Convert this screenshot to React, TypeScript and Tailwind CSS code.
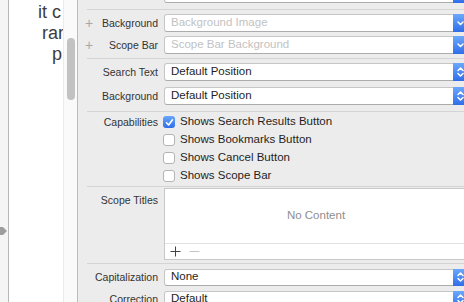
import React from 'react';

function Chevron({ double }: { double?: boolean }) {
    return (
        <svg width="9" height="12" viewBox="0 0 9 12" fill="none" stroke="white" strokeWidth="1.5" strokeLinecap="round" strokeLinejoin="round">
            {double ? (
                <>
                    <path d="M2 4.5 L4.5 2 L7 4.5" />
                    <path d="M2 7.5 L4.5 10 L7 7.5" />
                </>
            ) : (
                <path d="M2 5 L4.5 7.5 L7 5" />
            )}
        </svg>
    );
}

function Field({ text, placeholder, single, h = 'h-[18px]' }: { text?: string; placeholder?: boolean; single?: boolean; h?: string }) {
    return (
        <div className={`flex ${h} w-[304px] shrink-0 items-stretch rounded-[3px] border border-[#c6c6c6] border-b-[#acacac] bg-white`}>
            <div className={`flex flex-1 items-center pl-[6px] text-[11.5px] ${placeholder ? 'text-[#c2c2c2]' : 'text-[#1e1e1e]'}`}>{text}</div>
            <div className="-my-px -mr-px flex w-[15px] items-center justify-center rounded-r-[3px] bg-gradient-to-b from-[#6ba8fc] to-[#2f6ee9]">
                <Chevron double={!single} />
            </div>
        </div>
    );
}

function Row({ label, plus, children, className = '' }: { label: string; plus?: boolean; children: React.ReactNode; className?: string }) {
    return (
        <div className={`flex h-[18px] items-center ${className}`}>
            <div className="flex w-[80px] shrink-0 items-center justify-between pl-[7px]">
                <span className="text-[14px] font-light leading-none text-[#a8a8a8]">{plus ? '+' : ''}</span>
                <span className="text-[10.5px] leading-none text-[#333]">{label}</span>
            </div>
            <div className="ml-[6px]">{children}</div>
        </div>
    );
}

function Check({ on, label }: { on?: boolean; label: string }) {
    return (
        <div className="flex h-[18px] items-center">
            {on ? (
                <div className="flex h-[12px] w-[12px] items-center justify-center rounded-[3px] bg-gradient-to-b from-[#69a6fb] to-[#2f6ee9]">
                    <svg width="9" height="9" viewBox="0 0 9 9" fill="none" stroke="white" strokeWidth="1.6" strokeLinecap="round" strokeLinejoin="round">
                        <path d="M1.5 4.8 L3.6 7 L7.5 1.8" />
                    </svg>
                </div>
            ) : (
                <div className="h-[12px] w-[12px] rounded-[3px] border border-[#b4b4b4] bg-white" />
            )}
            <span className="ml-[5px] text-[11.5px] leading-none text-[#1e1e1e]">{label}</span>
        </div>
    );
}

function Divider({ className = '' }: { className?: string }) {
    return <div className={`ml-[9px] h-px shrink-0 bg-[#d4d4d4] ${className}`} />;
}

export default function App() {
    return (
        <div className="flex h-[302px] w-[464px] overflow-hidden bg-[#ececec]" style={{ fontFamily: '"Liberation Sans", Arial, sans-serif' }}>
            {/* left edge of the canvas */}
            <div className="relative w-[9px] shrink-0 border-r border-[#b8b8b8] bg-[#f5f5f5]">
                <svg className="absolute left-0 top-[225px]" width="8" height="12" viewBox="0 0 8 12">
                    <path d="M0 2 L3 2 L7 6 L3 10 L0 10 Z" fill="#9d9d9d" />
                </svg>
            </div>
            <div className="w-[54px] shrink-0 overflow-hidden bg-white pt-[2px] text-[18px] leading-[21px] text-[#3c3c3c]">
                <div className="whitespace-nowrap pl-[29px]">it c</div>
                <div className="whitespace-nowrap pl-[33px]">rar</div>
                <div className="whitespace-nowrap pl-[43px]">p</div>
            </div>
            <div className="w-[15px] shrink-0 border-l border-r border-l-[#ebebeb] border-r-[#bcbcbc] bg-[#fafafa] pl-[3px] pt-[38px]">
                <div className="h-[62px] w-[8px] rounded-full bg-[#c2c2c2]" />
            </div>

            {/* inspector */}
            <div className="flex h-[302px] w-[390px] shrink-0 flex-col">
                <div className="-mt-[15px] ml-[86px] shrink-0">
                    <Field text="" single />
                </div>
                <Divider className="mt-[6px]" />
                <Row label="Background" plus className="mt-[4px] shrink-0">
                    <Field text="Background Image" placeholder single />
                </Row>
                <Row label="Scope Bar" plus className="mt-[4px] shrink-0">
                    <Field text="Scope Bar Background" placeholder single />
                </Row>
                <Divider className="mt-[4px]" />
                <Row label="Search Text" className="mt-[4px] shrink-0">
                    <Field text="Default Position" />
                </Row>
                <Row label="Background" className="mt-[6px] shrink-0">
                    <Field text="Default Position" />
                </Row>
                <Divider className="mt-[6px]" />

                <div className="mt-[1px] flex shrink-0">
                    <div className="flex h-[18px] w-[80px] shrink-0 items-center justify-end">
                        <span className="text-[10.5px] leading-none text-[#333]">Capabilities</span>
                    </div>
                    <div className="ml-[5px] flex flex-col">
                        <Check on label="Shows Search Results Button" />
                        <Check label="Shows Bookmarks Button" />
                        <Check label="Shows Cancel Button" />
                        <Check label="Shows Scope Bar" />
                    </div>
                </div>
                <Divider className="mt-[1px]" />

                <div className="mt-[1px] flex shrink-0">
                    <div className="flex w-[80px] shrink-0 justify-end pt-[7px]">
                        <span className="text-[10.5px] leading-none text-[#333]">Scope Titles</span>
                    </div>
                    <div className="ml-[6px] flex h-[72px] w-[304px] flex-col border border-[#c8c8c8] bg-white">
                        <div className="flex flex-1 items-center justify-center text-[11.5px] text-[#8e8e8e]">No Content</div>
                        <div className="flex h-[16px] items-center gap-[8px] border-t border-[#e2e2e2] pl-[5px]">
                            <svg width="11" height="11" viewBox="0 0 11 11" stroke="#444" strokeWidth="1">
                                <path d="M5.5 0.5 V10.5 M0.5 5.5 H10.5" />
                            </svg>
                            <svg width="11" height="11" viewBox="0 0 11 11" stroke="#c4c4c4" strokeWidth="1">
                                <path d="M0.5 5.5 H10.5" />
                            </svg>
                        </div>
                    </div>
                </div>
                <Divider className="mt-[3px]" />

                <Row label="Capitalization" className="mt-[4px] h-[17px] shrink-0">
                    <Field text="None" h="h-[17px]" />
                </Row>
                <Row label="Correction" className="mt-[4px] h-[17px] shrink-0">
                    <Field text="Default" h="h-[17px]" />
                </Row>
            </div>
        </div>
    );
}
